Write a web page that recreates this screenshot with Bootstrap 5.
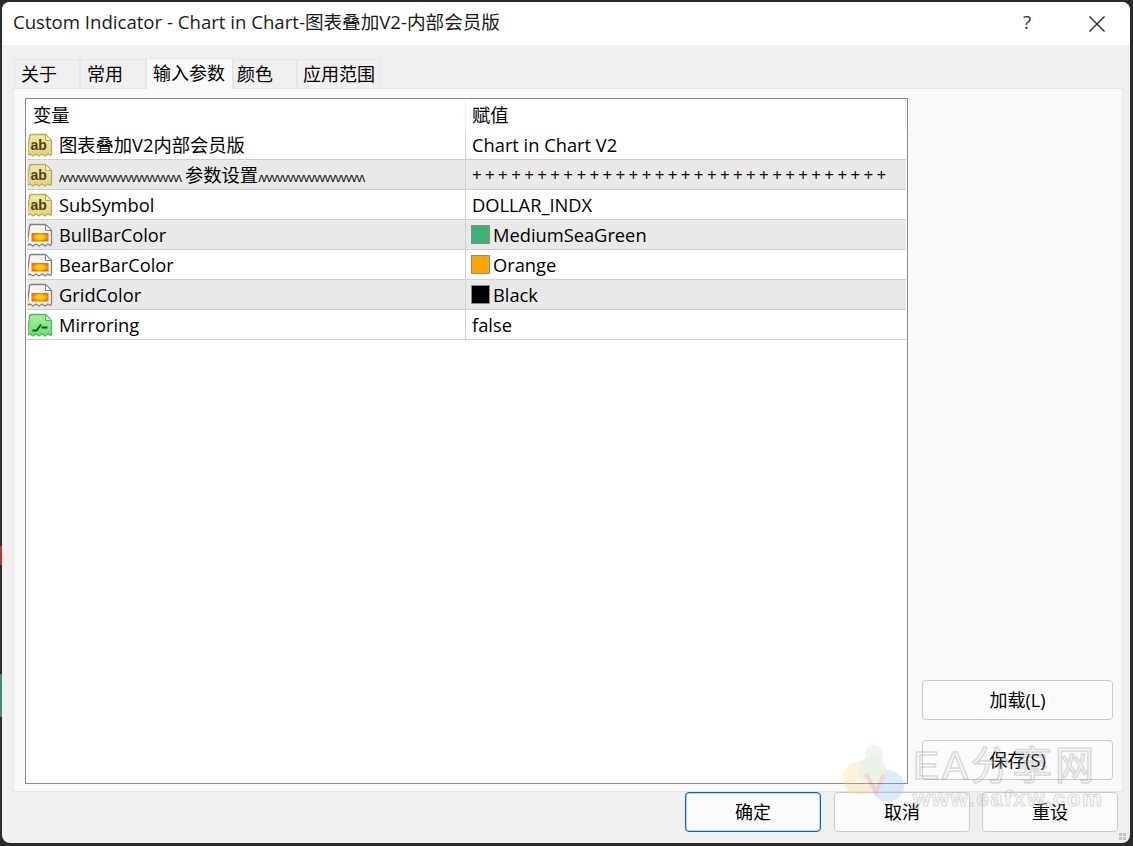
<!DOCTYPE html>
<html lang="zh">
<head>
<meta charset="utf-8">
<title>Custom Indicator</title>
<link href="https://cdn.jsdelivr.net/npm/bootstrap@5.3.0/dist/css/bootstrap.min.css" rel="stylesheet">
<style>
html,body{height:100%;margin:0;overflow:hidden}
body{background:#2b2b2b;padding:2px 3px 3px 2px;font-family:"Open Sans","Noto Sans CJK SC",sans-serif;font-size:18px;color:#000;position:relative}
.win{height:841px;background:#f0f0f0;border-radius:8px;overflow:hidden;position:relative}
.ttl{height:43px;background:#fff;padding:0 0 0 11px}
.ttl-text{font-size:18.6px;color:#1a1a1a;line-height:40px;align-self:flex-start}
.ttl-q{width:46px;text-align:center;font-size:19px;color:#333;line-height:40px;margin-right:38px;align-self:flex-start}
.ttl-x{width:18px;height:18px;margin-right:24px}
.spacer{flex:1}
.tabstrip{height:43px;padding:13px 0 0 12px;align-items:flex-end}
.tb{height:29px;background:#f0f0f0;border:1px solid #e6e6e6;border-bottom:0;font-size:18px;line-height:28px;padding-left:6px}
.tb.on{height:31px;background:#f9f9f9;line-height:29px;position:relative;z-index:1;margin-bottom:-1px}
.panel{height:704px;margin:0 7px 0 11px;background:#f9f9f9;border:1px solid #e6e6e6;padding:9px 0 0 11px;gap:14px}
.grid-box{width:883px;height:686px;border:1px solid #8a8a92;background:#fff}
.hd{height:31px;line-height:31px;font-size:18.3px;margin:0 1px}
.rw{height:30px;border-bottom:1px solid #cfcfcf;line-height:29px;font-size:18.3px;margin:0 1px}
.rw.alt{background:#e9e9e9}
.c1{width:439px;flex:none;border-right:1px solid #d2d2d2;height:100%;position:relative}
.c1.nm{padding-left:32px}
.hd .c1{padding-left:6px;border-right:1px solid #ececec}
.hd .c2{border-right:1px solid #ececec}
.c2{padding-left:6px;flex:1}
.c2.col{padding-left:5px}
.ic{position:absolute;left:1px;top:3px;width:25px;height:25px}
.swatch{width:19px;height:19px;border:1px solid #8c8c8c;margin-right:3px;flex:none}
.wave{font-family:"Liberation Sans",sans-serif;font-size:13px;letter-spacing:-1.2px;line-height:24px;padding-top:6px;color:#222;white-space:nowrap;flex:none;display:block;height:29px;overflow:visible}
.plus{letter-spacing:3.33px;font-size:17px;white-space:nowrap}
.side{width:191px;height:100%;padding-bottom:11px;gap:20px}
.wbtn{height:40px;width:100%;background:#fbfbfb;border:1px solid #cbcbcb;border-radius:4px;font-size:18px;color:#000;padding:0;line-height:36px}
.wbtn:hover{background:#fbfbfb;border-color:#cbcbcb;color:#000}
.foot{height:40px;padding-right:12px;gap:13px;position:relative;z-index:1}
.foot .wbtn{width:136px;line-height:35px}
.foot .wbtn.pri{border:1px solid #0067c0;box-shadow:inset 0 0 0 .5px #7fb3e0}
.foot .wbtn+.wbtn+.wbtn{margin-left:-1px}
.wm{position:absolute;left:842px;top:740px;width:270px;height:72px;opacity:.26;pointer-events:none;z-index:3}
.wm-big{position:absolute;left:71px;top:1px;font-family:"Liberation Sans","Noto Sans CJK SC",sans-serif;font-size:39px;line-height:50px;letter-spacing:3px;color:#fff;-webkit-text-stroke:1.6px #808080;white-space:nowrap}
.wm-sm{position:absolute;left:71px;top:46px;font-family:"Liberation Sans",sans-serif;font-weight:700;font-size:22px;line-height:26px;letter-spacing:1.7px;color:#fff;-webkit-text-stroke:1.1px #808080;white-space:nowrap}
.edge-a{position:absolute;left:0;top:546px;width:2px;height:19px;background:#b5382c}
.edge-b{position:absolute;left:0;top:674px;width:2px;height:43px;background:#4a8a6a}
.grip{position:absolute;right:3px;bottom:2px;width:8px;height:8px}
</style>
</head>
<body>
<svg width="0" height="0" class="position-absolute">
<defs>
<linearGradient id="gy" x1="0" y1="0" x2="0" y2="1"><stop offset="0" stop-color="#f3e9a6"/><stop offset="1" stop-color="#e2d27c"/></linearGradient>
<linearGradient id="gg" x1="0" y1="0" x2="0" y2="1"><stop offset="0" stop-color="#a5f0a0"/><stop offset="1" stop-color="#6fdc74"/></linearGradient>
<radialGradient id="gc"><stop offset="0" stop-color="#fff000"/><stop offset=".55" stop-color="#ffc000"/><stop offset="1" stop-color="#ff6a00"/></radialGradient>
<symbol id="i-ab" viewBox="0 0 25 25">
<path d="M1.500 3.500q0-2 2-2h14l6 6v13q0 1.500-1 2l-2.500-1.500-3 2-3-2-3 2-3-2-3 2-3-2-1.500 1q-1-.5-1-2z" fill="url(#gy)" stroke="#b9aa58" stroke-width="1.300"/>
<path d="M17.500 1.500v6h6z" fill="#fbf6d0" stroke="#b9aa58"/>
<text x="2.500" y="16.500" font-family="Liberation Sans" font-weight="700" font-size="14" fill="#4a4420">ab</text>
</symbol>
<symbol id="i-col" viewBox="0 0 25 25">
<path d="M1.500 3.500q0-2 2-2h14l6 6v13q0 1.500-1 2l-2.500-1.500-3 2-3-2-3 2-3-2-3 2-3-2-1.500 1q-1-.5-1-2z" fill="#f4f4f4" stroke="#808080" stroke-width="1.300"/>
<path d="M17.500 1.500v6h6z" fill="#fff" stroke="#808080"/>
<rect x="3.500" y="10" width="17" height="8.500" fill="url(#gc)"/>
</symbol>
<symbol id="i-bool" viewBox="0 0 25 25">
<path d="M1.500 3.500q0-2 2-2h14l6 6v13q0 1.500-1 2l-2.500-1.500-3 2-3-2-3 2-3-2-3 2-3-2-1.500 1q-1-.5-1-2z" fill="url(#gg)" stroke="#55b55a" stroke-width="1.300"/>
<path d="M17.500 1.500v6h6z" fill="#d6f8d6" stroke="#55b55a"/>
<path d="M4.500 17.500h4l4.500-6M13.500 14.500h6" fill="none" stroke="#0c5a1c" stroke-width="2"/>
</symbol>
</defs>
</svg>
<span class="edge-a"></span><span class="edge-b"></span>
<div class="win d-flex flex-column">
  <div class="ttl d-flex align-items-center">
    <div class="ttl-text">Custom Indicator - Chart in Chart-图表叠加V2-内部会员版</div>
    <div class="spacer"></div>
    <div class="ttl-q">?</div>
    <svg class="ttl-x" viewBox="0 0 18 18"><path d="M1.500 1.500 16.500 16.500M16.500 1.500 1.500 16.500" stroke="#222" stroke-width="1.300" fill="none"/></svg>
  </div>
  <div class="tabstrip d-flex">
    <div class="tb" style="width:66px">关于</div>
    <div class="tb" style="width:66px">常用</div>
    <div class="tb on" style="width:87px">输入参数</div>
    <div class="tb" style="width:64px;padding-left:3px">颜色</div>
    <div class="tb" style="width:83px;padding-left:5px">应用范围</div>
  </div>
  <div class="panel d-flex">
    <div class="grid-box">
      <div class="hd d-flex"><div class="c1">变量</div><div class="c2">赋值</div></div>

      <div class="rw d-flex"><div class="c1 nm"><svg class="ic"><use href="#i-ab"/></svg>图表叠加V2内部会员版</div><div class="c2">Chart in Chart V2</div></div>

      <div class="rw alt d-flex"><div class="c1 nm d-flex"><svg class="ic"><use href="#i-ab"/></svg><span class="wave" style="width:126px">ʌʌʌʌʌʌʌʌʌʌʌʌʌʌʌʌʌʌʌʌʌʌʌ</span><span>参数设置</span><span class="wave" style="width:108px">ʌʌʌʌʌʌʌʌʌʌʌʌʌʌʌʌʌʌʌʌ</span></div><div class="c2 plus">++++++++++++++++++++++++++++++++</div></div>

      <div class="rw d-flex"><div class="c1 nm"><svg class="ic"><use href="#i-ab"/></svg>SubSymbol</div><div class="c2">DOLLAR_INDX</div></div>

      <div class="rw alt d-flex"><div class="c1 nm"><svg class="ic"><use href="#i-col"/></svg>BullBarColor</div><div class="c2 col d-flex align-items-center"><span class="swatch" style="background:#3cb371"></span><span>MediumSeaGreen</span></div></div>

      <div class="rw d-flex"><div class="c1 nm"><svg class="ic"><use href="#i-col"/></svg>BearBarColor</div><div class="c2 col d-flex align-items-center"><span class="swatch" style="background:#ffa500"></span><span>Orange</span></div></div>

      <div class="rw alt d-flex"><div class="c1 nm"><svg class="ic"><use href="#i-col"/></svg>GridColor</div><div class="c2 col d-flex align-items-center"><span class="swatch" style="background:#000"></span><span>Black</span></div></div>

      <div class="rw d-flex"><div class="c1 nm"><svg class="ic"><use href="#i-bool"/></svg>Mirroring</div><div class="c2">false</div></div>
    </div>
    <div class="side d-flex flex-column justify-content-end">
      <button type="button" class="btn wbtn">加载(L)</button>
      <button type="button" class="btn wbtn">保存(S)</button>
    </div>
  </div>
  <div class="foot d-flex justify-content-end">
    <button type="button" class="btn wbtn pri">确定</button>
    <button type="button" class="btn wbtn">取消</button>
    <button type="button" class="btn wbtn">重设</button>
  </div>
  <svg class="grip" viewBox="0 0 8 8"><path d="M0 0h3v3H0zM4 0h3v3H4zM0 4h3v3H0zM4 4h3v3H4z" fill="#c4c4c4"/></svg>
</div>
<div class="wm">
  <svg width="68" height="72" viewBox="0 0 68 72" class="position-absolute top-0 start-0"><circle cx="32" cy="14" r="9" fill="#bfe3c0"/><circle cx="18" cy="38" r="17" fill="#f5d566"/><circle cx="46" cy="46" r="16" fill="#7db8e8"/><circle cx="30" cy="30" r="14" fill="#a9d8a0"/><path d="M24 34 34 52 42 34" fill="none" stroke="#e05a4a" stroke-width="4"/></svg>
  <div class="wm-big">EA分享网</div>
  <div class="wm-sm">www.eafxw.com</div>
</div>
</body>
</html>
